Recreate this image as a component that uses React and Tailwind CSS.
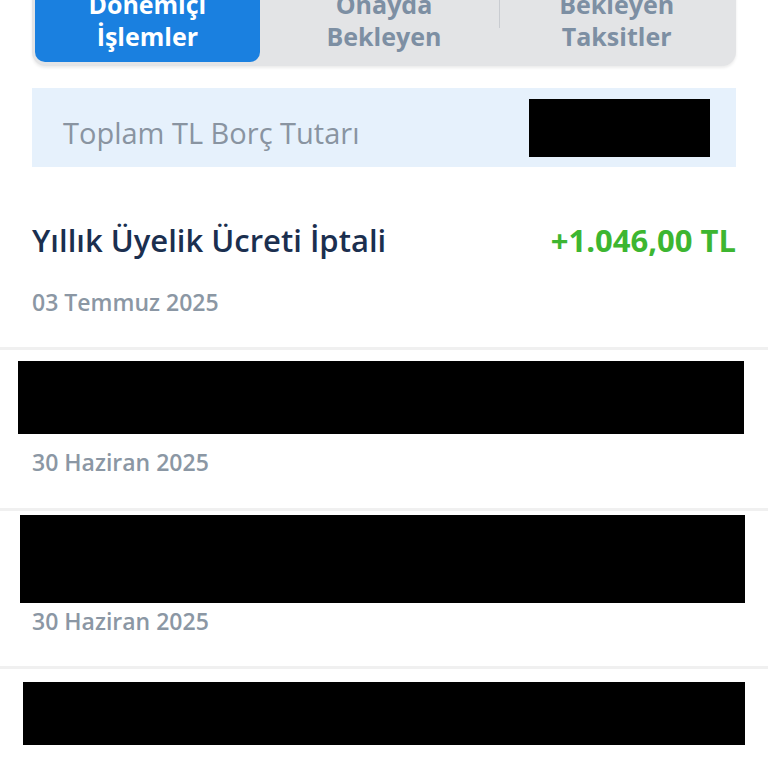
import React from 'react';

const tabs = [
  { label: ['Dönemiçi', 'İşlemler'], active: true },
  { label: ['Onayda', 'Bekleyen'] },
  { label: ['Bekleyen', 'Taksitler'] },
];

// hidden = redacted block in the screenshot
const rows = [
  { title: 'Yıllık Üyelik Ücreti İptali', amount: '+1.046,00 TL', date: '03 Temmuz 2025' },
  { hidden: 'mt-[11px] h-[73px] ml-[18px] mr-[24px]', dateGap: 'mt-[13px] pb-[30px]', date: '30 Haziran 2025' },
  { hidden: 'mt-[4px] h-[88px] ml-[20px] mr-[23px]', dateGap: 'mt-[3px] pb-[29px]', date: '30 Haziran 2025' },
  { hidden: 'mt-[13px] h-[63px] ml-[23px] mr-[23px]' },
];

export default function App() {
  return (
    <div className="h-[768px] overflow-hidden bg-white font-['Open_Sans',sans-serif]">
      {/* tabs */}
      <div className="mx-8 -mt-[24px] grid grid-cols-3 rounded-b-[14px] bg-[#e3e4e6] px-[3px] pb-[4px] shadow-[0_2px_3px_rgba(0,0,0,0.08)]">
        {tabs.map((t, i) => (
          <div key={i} className="relative">
            <div
              className={
                t.active
                  ? 'mr-[8px] rounded-b-[10px] bg-[#1a80e0] pt-[12px] pb-[10px] text-center text-[25px] font-bold leading-[32px] text-white'
                  : 'pt-[12px] pb-[10px] text-center text-[25px] font-bold leading-[32px] text-[#7d8fa3]'
              }
            >
              {t.label[0]}
              <br />
              {t.label[1]}
            </div>
            {i === 1 && <div className="absolute right-0 top-0 h-[52px] w-px bg-[#c9ccd1]" />}
          </div>
        ))}
      </div>

      {/* total */}
      <div className="mx-8 mt-[22px] flex h-[79px] items-center justify-between bg-[#e6f1fc] pl-[31px] pr-[26px]">
        <span className="mt-[10px] text-[29px] leading-[39px] text-[#8994a1]">Toplam TL Borç Tutarı</span>
        <div className="h-[58px] w-[181px] bg-black" />
      </div>

      {/* list */}
      <div className="mt-[52px]">
        {rows.map((r, i) => (
          <div key={i} className={i < rows.length - 1 ? 'border-b-[3px] border-[#f0f0f0]' : ''}>
            {r.title ? (
              <div className="mx-8 flex items-center justify-between">
                <span className="text-[31px] font-semibold leading-[42px] text-[#1b2f4f]">{r.title}</span>
                <span className="text-[31px] font-bold leading-[42px] text-[#3db631]">{r.amount}</span>
              </div>
            ) : (
              <div className={`bg-black ${r.hidden}`} />
            )}
            {r.date && (
              <div className={`mx-8 text-[23px] font-semibold leading-[31px] text-[#8b97a4] ${r.title ? 'mt-[26px] pb-[29px]' : r.dateGap}`}>
                {r.date}
              </div>
            )}
          </div>
        ))}
      </div>
    </div>
  );
}
